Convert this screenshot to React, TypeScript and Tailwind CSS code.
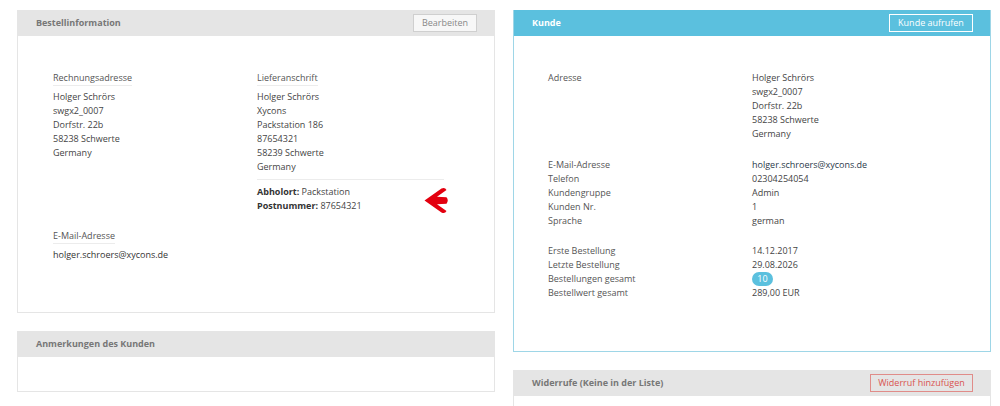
import React from "react";

const font = { fontFamily: '"Open Sans", "Noto Sans", sans-serif' };

function Arrow() {
    return (
        <svg className="absolute left-[167px] top-[7px]" width="25" height="27" viewBox="0 0 25 27">
            <path
                d="M0.5 13.5 L17.5 1.5 Q21 0 22.5 3 L13 9.8 L22.5 10.3 Q25 13.5 22.5 16.7 L13 17.2 L22.5 24 Q21 27 17.5 25.5 Z"
                fill="#e3000f"
            />
        </svg>
    );
}

function Header({ title, blue, children }: { title: string; blue?: boolean; children?: React.ReactNode }) {
    return (
        <div className={`flex h-[26px] items-center justify-between pl-[18px] pr-[17px] ${blue ? "bg-[#5bc0de]" : "bg-[#e5e5e5]"}`}>
            <span className={`text-[9px] font-bold ${blue ? "text-white" : "text-[#777]"}`}>{title}</span>
            {children}
        </div>
    );
}

function Label({ children }: { children: React.ReactNode }) {
    return (
        <div className="mb-[4px]">
            <span className="inline-block border-b border-[#ececec] leading-[14px] text-[#555]">{children}</span>
        </div>
    );
}

function Row({ label, children }: { label: string; children: React.ReactNode }) {
    return (
        <div className="flex">
            <div className="w-[204px] text-[#555]">{label}</div>
            <div className="text-[#444]">{children}</div>
        </div>
    );
}

export default function App() {
    return (
        <div style={font} className="grid min-h-[406px] grid-cols-[478px_478px] items-start gap-[18px] bg-white pl-[17px] pt-[10px] text-[9px] leading-[14px]">
            <div className="flex flex-col gap-[18px]">
                <div className="border border-t-0 border-[#e5e5e5]">
                    <Header title="Bestellinformation">
                        <button className="h-[18px] w-[64px] border border-[#cfcfcf] bg-[#f7f7f7] text-[9px] text-[#888]">Bearbeiten</button>
                    </Header>
                    <div className="pb-[50px] pl-[35px] pt-[35px] text-[#444]">
                        <div className="flex">
                            <div className="w-[204px] shrink-0">
                                <Label>Rechnungsadresse</Label>
                                <div>Holger Schrörs</div>
                                <div>swgx2_0007</div>
                                <div>Dorfstr. 22b</div>
                                <div>58238 Schwerte</div>
                                <div>Germany</div>
                            </div>
                            <div className="w-[187px] shrink-0">
                                <Label>Lieferanschrift</Label>
                                <div>Holger Schrörs</div>
                                <div>Xycons</div>
                                <div>Packstation 186</div>
                                <div>87654321</div>
                                <div>58239 Schwerte</div>
                                <div>Germany</div>
                                <div className="relative mt-[5px] w-[187px] border-t border-[#ececec] pt-[5px]">
                                    <div><span className="font-bold text-[#333]">Abholort:</span> Packstation</div>
                                    <div><span className="font-bold text-[#333]">Postnummer:</span> 87654321</div>
                                    <Arrow />
                                </div>
                            </div>
                        </div>
                        <div className="mt-[16px]">
                            <Label>E-Mail-Adresse</Label>
                            <div className="text-[#333]">holger.schroers@xycons.de</div>
                        </div>
                    </div>
                </div>
                <div className="border border-t-0 border-[#e5e5e5]">
                    <Header title="Anmerkungen des Kunden" />
                    <div className="h-[34px]" />
                </div>
            </div>

            <div className="flex flex-col gap-[18px]">
                <div className="border border-t-0 border-[#9ed6e7]">
                    <Header title="Kunde" blue>
                        <button className="h-[18px] w-[84px] border border-white text-[9px] text-white">Kunde aufrufen</button>
                    </Header>
                    <div className="pb-[51px] pl-[34px] pt-[35px]">
                        <Row label="Adresse">
                            <div>Holger Schrörs</div>
                            <div>swgx2_0007</div>
                            <div>Dorfstr. 22b</div>
                            <div>58238 Schwerte</div>
                            <div>Germany</div>
                        </Row>
                        <div className="mt-[17px]">
                            <Row label="E-Mail-Adresse"><span className="text-[#2b3a4a]">holger.schroers@xycons.de</span></Row>
                            <Row label="Telefon">02304254054</Row>
                            <Row label="Kundengruppe">Admin</Row>
                            <Row label="Kunden Nr.">1</Row>
                            <Row label="Sprache">german</Row>
                        </div>
                        <div className="mt-[16px]">
                            <Row label="Erste Bestellung">14.12.2017</Row>
                            <Row label="Letzte Bestellung">29.08.2026</Row>
                            <Row label="Bestellungen gesamt">
                                <span className="inline-flex h-[14px] w-[21px] items-center justify-center rounded-full bg-[#5bc0de] text-white">10</span>
                            </Row>
                            <Row label="Bestellwert gesamt">289,00 EUR</Row>
                        </div>
                    </div>
                </div>
                <div className="border border-t-0 border-[#e5e5e5]">
                    <Header title="Widerrufe (Keine in der Liste)">
                        <button className="h-[18px] w-[103px] border border-[#e08c89] text-[9px] text-[#d9534f]">Widerruf hinzufügen</button>
                    </Header>
                    <div className="h-[20px]" />
                </div>
            </div>
        </div>
    );
}
